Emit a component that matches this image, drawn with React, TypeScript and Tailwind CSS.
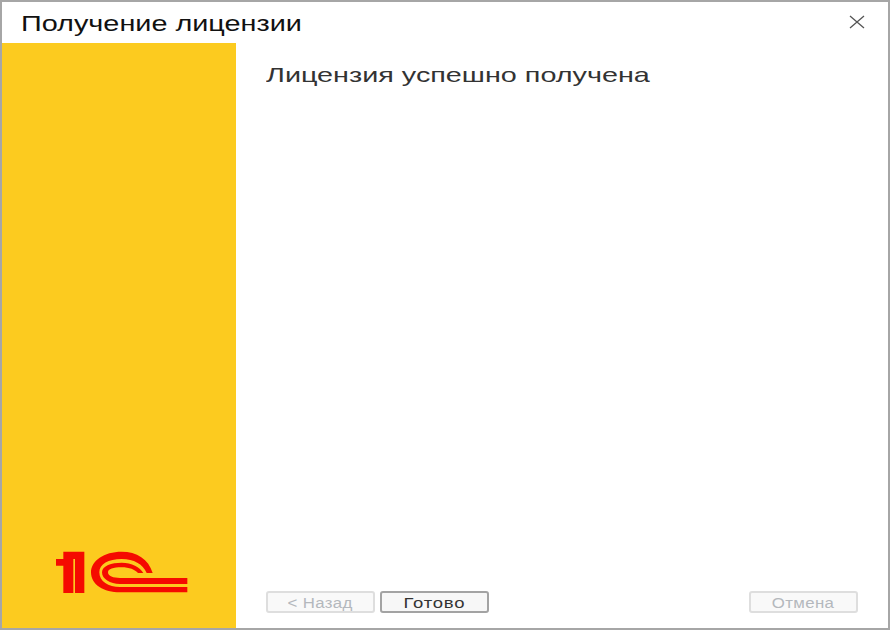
const Logo1C = () => (
  <svg width="180" height="80" viewBox="0 0 540 240" className="block">
    <path d="M78 90 H100 V68 H163 V192 H135 V90 H130 V192 H100 V110 H78 Z" fill="#f50a00" />
    <g fill="#f50a00">
      <path d="M368 132 C356 90 320 68 275 68 C222 68 183 95 183 130 C183 168 222 190 270 190 H472 V174 H270 C235 174 208 158 208 130 C208 105 235 90 275 90 C312 90 338 105 350 132 Z" />
      <path d="M340 132 C330 115 305 101 275 101 C245 101 216 110 216 130 C216 150 240 165 270 165 H472 V147 H270 C250 147 234 142 234 130 C234 120 250 115 275 115 C298 115 315 122 324 132 Z" />
    </g>
  </svg>
)

type WizardButtonType = {
  label: string
  active?: boolean
}

const WizardButton: React.FC<WizardButtonType> = ({ label, active }) => {
  return (
    <button
      className={
        active
          ? "w-[109px] h-[22px] rounded-[3px] border-2 border-[#a3a3a3] bg-[#f7f7f7] text-[14px] text-[#333333]"
          : "w-[109px] h-[22px] rounded-[3px] border-2 border-[#dedede] bg-[#f9f9f9] text-[14px] text-[#b4b8bd]"
      }
    >
      <span
        className={
          active
            ? "inline-block scale-x-[1.32] tracking-[0.6px]"
            : "inline-block scale-x-[1.2] tracking-[0.3px]"
        }
      >
        {label}
      </span>
    </button>
  )
}

export default function App() {
  return (
    <div className="w-[890px] h-[630px] flex flex-col border-2 border-[#a6a6a6] bg-white font-['Liberation_Sans',Arial,sans-serif] overflow-hidden">
      <div className="h-[41px] shrink-0 flex items-start justify-between pl-[19px] pr-[23px] pt-[5px]">
        <span className="origin-left scale-x-[1.31] text-[22px] text-[#111111]">Получение лицензии</span>
        <svg width="16" height="14" viewBox="0 0 16 14" className="mt-[8px]">
          <path d="M1 1 L15 13 M15 1 L1 13" stroke="#555555" strokeWidth="1.3" fill="none" />
        </svg>
      </div>
      <div className="flex-1 flex min-h-0">
        <div className="w-[234px] shrink-0 bg-[#fccb1f] flex flex-col justify-end pb-[19px]">
          <div className="ml-[28px]">
            <Logo1C />
          </div>
        </div>
        <div className="flex-1 flex flex-col justify-between items-start px-[30px] pb-[15px] pt-[16px]">
          <span className="origin-left scale-x-[1.37] text-[21px] text-[#333333]">Лицензия успешно получена</span>
          <div className="w-full flex items-center justify-between">
            <div className="flex gap-[5px]">
              <WizardButton label="< Назад" />
              <WizardButton label="Готово" active />
            </div>
            <WizardButton label="Отмена" />
          </div>
        </div>
      </div>
    </div>
  )
}
